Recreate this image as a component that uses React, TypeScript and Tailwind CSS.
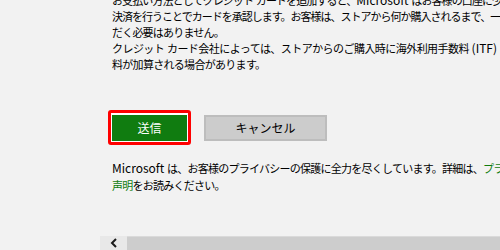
import React from 'react';

const font = { fontFamily: '"Meiryo UI", "Noto Sans CJK JP", "Noto Sans", sans-serif' };

const En: React.FC<{ children: React.ReactNode }> = ({ children }) => (
  <span className="tracking-normal text-[12px]">{children}</span>
);

const App: React.FC = () => {
  return (
    <div className="w-[500px] h-[250px] bg-[#f2f2f2] overflow-hidden flex flex-col text-black" style={font}>
      {/* Content */}
      <div className="h-[236px] pl-[112px] flex flex-col overflow-hidden">
        <div className="mt-[-8px] text-[11px] leading-[16px] whitespace-nowrap">
          <div className="tracking-[-0.9px]">お支払い方法としてクレジット<En> </En>カードを追加すると、<En>Microsoft </En>はお客様の口座に少額の一時的な</div>
          <div className="tracking-[-1px]">決済を行うことでカードを承認します。お客様は、ストアから何か購入されるまで、一切料金をお支払いいた</div>
          <div className="tracking-[-0.8px]">だく必要はありません。</div>
          <div className="tracking-[-0.55px]">クレジット<En> </En>カード会社によっては、ストアからのご購入時に海外利用手数料<En> (ITF) </En>と呼ばれる手数</div>
          <div className="tracking-[-0.7px]">料が加算される場合があります。</div>
        </div>

        {/* Buttons */}
        <div className="flex items-center gap-[13px] mt-[38px] ml-[-4px]">
          <div className="border-[3px] border-[#ff0000] rounded-[3px] bg-white p-px">
            <button className="w-[75px] h-[26px] bg-[#107c10] text-white text-[12px] leading-none">
              送信
            </button>
          </div>
          <button className="w-[123px] h-[26px] bg-[#cccccc] border-2 border-[#bdbdbd] text-[12px] leading-none text-black">
            キャンセル
          </button>
        </div>

        {/* Privacy */}
        <div className="mt-[14px] text-[11px] leading-[17px] tracking-[-0.75px] whitespace-nowrap">
          <div>
            <En>Microsoft </En>は、お客様のプライバシーの保護に全力を尽くしています。詳細は、
            <span className="text-[#107c10]">プライバシーに関する</span>
          </div>
          <div>
            <span className="text-[#107c10]">声明</span>をお読みください。
          </div>
        </div>
      </div>

      {/* Horizontal scrollbar */}
      <div className="flex h-[14px] ml-[100px]">
        <div className="w-[27px] bg-[#e8e8e8] flex items-center justify-center">
          <svg width="8" height="10" viewBox="0 0 8 10">
            <path d="M6 1 L2 5 L6 9" fill="none" stroke="#1a1a1a" strokeWidth="2" />
          </svg>
        </div>
        <div className="flex-1 bg-[#cdcdcd] border-t border-[#dadada]" />
      </div>
    </div>
  );
};

export default App;
